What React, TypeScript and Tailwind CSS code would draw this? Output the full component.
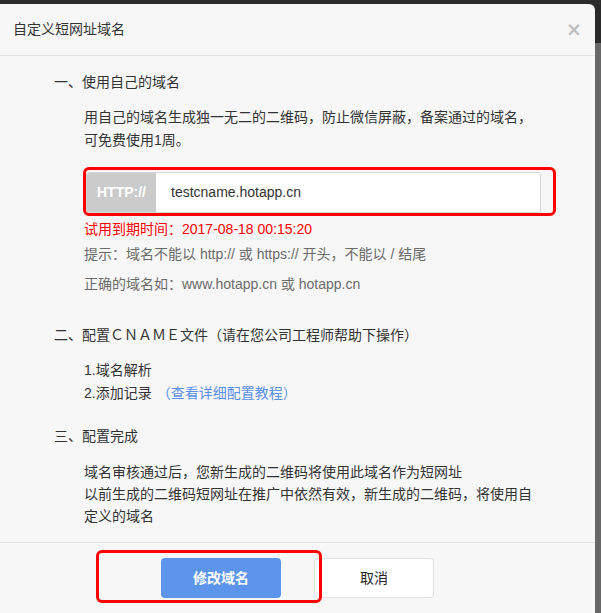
const FONT = "font-['Liberation_Sans','Noto_Sans_CJK_SC',sans-serif]";

function Section({ title, className = "" }: { title: string; className?: string }) {
  return <div className={`pl-[54px] text-[14px] leading-[20px] text-[#333] ${className}`}>{title}</div>;
}

export default function App() {
  return (
    <div
      className={`relative flex h-[613px] w-[601px] overflow-hidden bg-[#2b2b2b] [text-spacing-trim:space-all] [font-feature-settings:'chws'_0,'halt'_0] ${FONT}`}
    >
      <div className="mt-[4px] flex w-[595px] shrink-0 flex-col rounded-tr-[6px] bg-[#f7f7f7]">
        {/* header */}
        <div className="flex h-[52px] shrink-0 items-center justify-between border-b border-[#e2e2e2] pl-[13px] pr-[13px]">
          <span className="text-[14px] text-[#333]">自定义短网址域名</span>
          <span className="font-['DejaVu_Sans',sans-serif] text-[19px] font-bold leading-none text-[#c0c0c0]">×</span>
        </div>

        {/* body */}
        <div className="flex flex-col pb-[15px] pt-[16px]">
          <Section title="一、使用自己的域名" />
          <p className="mt-[14px] pl-[84px] text-[14px] leading-[23px] text-[#333]">
            用自己的域名生成独一无二的二维码，防止微信屏蔽，备案通过的域名，
            <br />
            可免费使用1周。
          </p>

          <div className="ml-[86px] mt-[20px] flex h-[41px] w-[455px] overflow-hidden rounded-[3px] border border-[#d6d6d6] bg-white">
            <div className="flex w-[69px] shrink-0 items-center justify-center bg-[#cbcbcb] text-[14px] font-bold text-white">
              HTTP://
            </div>
            <div className="flex items-center pl-[15px] text-[14px] text-[#333]">testcname.hotapp.cn</div>
          </div>

          <div className="mt-[6px] pl-[84px] text-[14px] leading-[20px] text-[#ff0000]">
            试用到期时间：2017-08-18 00:15:20
          </div>
          <div className="mt-[5px] pl-[84px] text-[14px] leading-[20px] text-[#6b6b6b]">
            提示：域名不能以 http:// 或 https:// 开头，不能以 / 结尾
          </div>
          <div className="mt-[10px] pl-[84px] text-[14px] leading-[20px] text-[#6b6b6b]">
            正确的域名如：www.hotapp.cn 或 hotapp.cn
          </div>

          <Section className="mt-[31px]" title="二、配置ＣＮＡＭＥ文件（请在您公司工程师帮助下操作）" />
          <div className="mt-[14px] pl-[84px] text-[14px] leading-[23px] text-[#333]">
            <div>1.域名解析</div>
            <div>
              2.添加记录<span className="ml-[5px] text-[#5b8fe6]">（查看详细配置教程）</span>
            </div>
          </div>

          <Section className="mt-[21px]" title="三、配置完成" />
          <p className="mt-[15px] pl-[84px] text-[14px] leading-[22px] text-[#333]">
            域名审核通过后，您新生成的二维码将使用此域名作为短网址
            <br />
            以前生成的二维码短网址在推广中依然有效，新生成的二维码，将使用自
            <br />
            定义的域名
          </p>
        </div>

        {/* footer */}
        <div className="flex justify-center gap-[33px] border-t border-[#e2e2e2] pt-[15px]">
          <button className="h-[40px] w-[120px] rounded-[4px] bg-[#5d95ed] text-[14px] font-bold text-white">
            修改域名
          </button>
          <button className="h-[40px] w-[120px] rounded-[4px] border border-[#e0e0e0] bg-white text-[14px] text-[#222]">
            取消
          </button>
        </div>
      </div>

      <div className="flex flex-1 flex-col">
        <div className="h-[43px] bg-[#2b2b2b]" />
        <div className="flex-1 bg-[#676767]" />
      </div>

      {/* annotation boxes */}
      <div className="pointer-events-none absolute left-[83px] top-[167px] h-[49px] w-[473px] rounded-[6px] border-[3px] border-[#ff0000]" />
      <div className="pointer-events-none absolute left-[96px] top-[550px] h-[53px] w-[226px] rounded-[6px] border-[3px] border-[#ff0000]" />
    </div>
  );
}
